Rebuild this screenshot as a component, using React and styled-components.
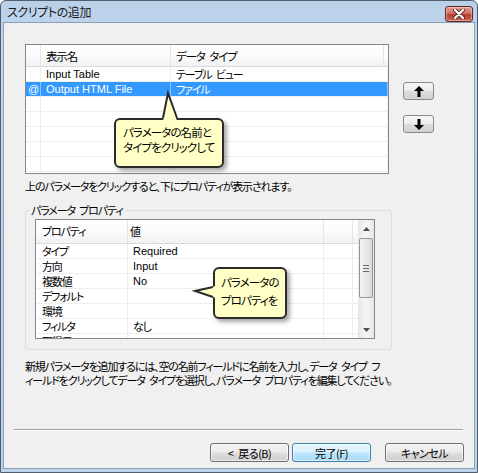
import React from 'react'
import styled, { createGlobalStyle, css } from 'styled-components'

const uiFont = `"Liberation Sans", "Noto Sans CJK JP", sans-serif`

// japanese ui text, squeezed to the width of the old ms ui gothic
const jpText = css`
  font-family: "Noto Sans CJK JP", sans-serif;
  font-size: 11px;
  letter-spacing: -1.15px;
  font-feature-settings: "palt";
`

const GlobalStyle = createGlobalStyle`
  html, body { margin: 0; padding: 0; background: #fff; }
  body {
    font-family: ${uiFont};
    font-size: 12px;
    color: #000;
    font-feature-settings: "palt";
  }
`

// window frame
const Window = styled.div`
  width: 478px;
  height: 473px;
  box-sizing: border-box;
  border: 1px solid #4f5d6c;
  border-radius: 6px 6px 0 0;
  background: linear-gradient(#b9d0e9, #c3d7ee 40px, #bcd2ea);
  padding: 0 2px 3px 2px;
  display: flex;
  flex-direction: column;
  overflow: hidden;
`
const TitleBar = styled.div`
  height: 21px;
  display: flex;
  align-items: center;
  justify-content: space-between;
  padding: 0 2px 0 4px;
`
const Title = styled.div`
  font-family: "Noto Sans CJK JP", sans-serif;
  font-size: 12px;
  letter-spacing: -0.4px;
  font-feature-settings: "palt";
  color: #1a1a1a;
`
const CloseButton = styled.div`
  width: 28px;
  height: 16px;
  margin-top: 5px;
  box-sizing: border-box;
  border: 1px solid #5a2b24;
  border-radius: 3px;
  background: linear-gradient(#e3a093, #cf7364 45%, #b83c2b 55%, #cc6656);
  box-shadow: inset 0 0 0 1px rgba(255, 220, 210, 0.5);
  display: flex;
  align-items: center;
  justify-content: center;
`
const Content = styled.div`
  flex: 1;
  background: #f0f0f0;
  border: 1px solid #8aa0b8;
  display: flex;
  flex-direction: column;
  min-height: 0;
`

// top list
const TopRow = styled.div`
  position: relative;
  display: flex;
  align-items: flex-start;
  margin: 21px 0 0 21px;
`
const ListBox = styled.div`
  width: 364px;
  height: 130px;
  box-sizing: border-box;
  border: 1px solid #828790;
  background: #fff;
  overflow: hidden;
`
const ListHeader = styled.div`
  display: grid;
  grid-template-columns: 15px 130px 1fr 4px;
  height: 21px;
  background: linear-gradient(#ffffff, #fbfbfc 50%, #f1f2f4);
  border-bottom: 1px solid #d9dadc;
`
const HeaderCell = styled.div`
  display: flex;
  align-items: center;
  padding-left: 5px;
  border-right: 1px solid #e4e5e7;
  ${jpText}
  font-size: 11.5px;
`
const ListRow = styled.div`
  display: grid;
  grid-template-columns: 15px 130px 1fr;
  height: 14px;
  border-bottom: 1px solid #eeeeee;
  background: ${p => (p.$selected ? '#3399ff' : '#fff')};
  color: ${p => (p.$selected ? '#fff' : '#000')};
`
const ListCell = styled.div`
  display: flex;
  align-items: center;
  padding-left: ${p => p.$pad ?? 5}px;
  border-right: 1px solid ${p => (p.$selected ? '#8cc4ff' : '#eeeeee')};
  white-space: nowrap;
  overflow: hidden;
  ${p => (p.$latin ? `font-family: ${uiFont}; font-size: 11px;` : jpText)}
`
const SideButtons = styled.div`
  display: flex;
  flex-direction: column;
  gap: 15px;
  margin: 38px 0 0 14px;
`
const ArrowButton = styled.div`
  width: 31px;
  height: 18px;
  box-sizing: border-box;
  border: 1px solid #8a8a8a;
  border-radius: 3px;
  background: linear-gradient(#f6f6f6, #ececec 48%, #dcdcdc 52%, #d2d2d2);
  display: flex;
  align-items: center;
  justify-content: center;
`

// callouts
const Callout = styled.div`
  position: absolute;
  left: ${p => p.$left}px;
  top: ${p => p.$top}px;
  width: ${p => p.$w}px;
  height: ${p => p.$h}px;
  box-sizing: border-box;
  background: #ffffc6;
  border: 2px solid #2b2b2b;
  border-radius: 6px;
  box-shadow: 3px 3px 4px rgba(0, 0, 0, 0.35);
  padding: ${p => p.$pad};
  ${jpText}
  font-size: 11.5px;
  letter-spacing: -0.9px;
  line-height: ${p => p.$lh}px;
  white-space: nowrap;
  z-index: 2;
`
const Tail = styled.svg`
  position: absolute;
  overflow: visible;
  left: ${p => p.$left}px;
  top: ${p => p.$top}px;
`

const Hint = styled.div`
  margin: 5px 0 0 21px;
  line-height: 14px;
  ${jpText}
`

// property group
const Group = styled.fieldset`
  margin: 10px 0 0 21px;
  width: 366px;
  box-sizing: border-box;
  padding: 2px 16px 10px 9px;
  border: 1px solid #d5dfe5;
  border-radius: 3px;
`
const GroupLabel = styled.legend`
  padding: 0 2px;
  margin-left: -6px;
  line-height: 14px;
  ${jpText}
`
const PropWrap = styled.div`
  position: relative;
`
const PropTable = styled.div`
  width: 340px;
  height: 120px;
  box-sizing: border-box;
  border: 1px solid #828790;
  background: #fff;
  display: flex;
`
const PropGrid = styled.div`
  flex: 1;
  overflow: hidden;
`
const PropHeader = styled.div`
  display: grid;
  grid-template-columns: 92px 196px 29px 1fr;
  height: 23px;
  background: linear-gradient(#ffffff, #fbfbfc 50%, #f1f2f4);
  border-bottom: 1px solid #d9dadc;
`
const PropRow = styled.div`
  display: grid;
  grid-template-columns: 92px 196px 29px 1fr;
  height: 14px;
  border-bottom: 1px solid #eeeeee;
`
const PropCell = styled.div`
  display: flex;
  align-items: center;
  padding-left: ${p => p.$pad ?? 6}px;
  border-right: 1px solid ${p => (p.$head ? '#e4e5e7' : '#eeeeee')};
  white-space: nowrap;
  overflow: hidden;
  line-height: 13px;
  ${p => (p.$latin ? `font-family: ${uiFont}; font-size: 11px;` : jpText)}
`
const ScrollBar = styled.div`
  width: 16px;
  background: linear-gradient(90deg, #e6e6e6, #f4f4f4 40%, #f4f4f4 60%, #e6e6e6);
  display: flex;
  flex-direction: column;
  align-items: center;
`
const ScrollArrow = styled.div`
  height: 17px;
  width: 16px;
  display: flex;
  align-items: center;
  justify-content: center;
`
const Thumb = styled.div`
  width: 14px;
  height: 60px;
  margin-top: 1px;
  box-sizing: border-box;
  border: 1px solid #979797;
  border-radius: 2px;
  background: linear-gradient(90deg, #f3f3f3, #e9e9e9 50%, #d9d9d9);
  display: flex;
  align-items: center;
  justify-content: center;
`
const ScrollSpace = styled.div`
  flex: 1;
`

const Description = styled.div`
  margin: 9px 0 0 21px;
  line-height: 14px;
  ${jpText}
`
const Spacer = styled.div`
  flex: 1;
`
const Separator = styled.div`
  height: 1px;
  margin: 0 11px 12px 10px;
  background: #a0a0a0;
  border-bottom: 1px solid #fff;
`
const Footer = styled.div`
  display: flex;
  justify-content: flex-end;
  padding: 0 10px 6px 0;
`
const DialogButton = styled.div`
  width: 79px;
  height: 19px;
  margin-left: ${p => p.$gap}px;
  box-sizing: border-box;
  border: 1px solid ${p => (p.$default ? '#3c7fb1' : '#707070')};
  border-radius: 3px;
  background: ${p =>
    p.$default
      ? 'linear-gradient(#eaf6fd, #d9f0fc 48%, #bee6fd 52%, #a7d9f5)'
      : 'linear-gradient(#f2f2f2, #ebebeb 48%, #dddddd 52%, #cfcfcf)'};
  box-shadow: inset 0 0 0 1px rgba(255, 255, 255, 0.6);
  display: flex;
  align-items: center;
  justify-content: center;
  ${jpText}
  letter-spacing: -0.5px;
`

const sp = '\u2002'

const listRows = [
  { mark: '', name: 'Input Table', type: `テーブル${sp}ビュー` },
  { mark: '@', name: 'Output HTML File', type: 'ファイル', selected: true },
  {}, {}, {}, {}, {},
]

const propRows = [
  ['タイプ', 'Required'],
  ['方向', 'Input'],
  ['複数値', 'No'],
  ['デフォルト', ''],
  ['環境', ''],
  ['フィルタ', 'なし'],
  ['取得元', ''],
]

function UpArrow() {
  return (
    <svg width="10" height="11" viewBox="0 0 10 11">
      <path d="M5 0 L10 5 H6.5 V11 H3.5 V5 H0 Z" fill="#000" />
    </svg>
  )
}
function DownArrow() {
  return (
    <svg width="10" height="11" viewBox="0 0 10 11">
      <path d="M5 11 L10 6 H6.5 V0 H3.5 V6 H0 Z" fill="#000" />
    </svg>
  )
}

function App() {
  return (
    <>
      <GlobalStyle />
      <Window>
        <TitleBar>
          <Title>スクリプトの追加</Title>
          <CloseButton>
            <svg width="12" height="10" viewBox="0 0 12 10">
              <path d="M2 1 L10 9 M10 1 L2 9" stroke="#5a2b24" strokeWidth="4" strokeLinecap="round" />
              <path d="M2 1 L10 9 M10 1 L2 9" stroke="#fff" strokeWidth="2.2" strokeLinecap="round" />
            </svg>
          </CloseButton>
        </TitleBar>
        <Content>
          <TopRow>
            <ListBox>
              <ListHeader>
                <HeaderCell />
                <HeaderCell>表示名</HeaderCell>
                <HeaderCell>データ{sp}タイプ</HeaderCell>
                <HeaderCell />
              </ListHeader>
              {listRows.map((r, i) => (
                <ListRow key={i} $selected={r.selected}>
                  <ListCell $pad={2} $latin $selected={r.selected}>{r.mark}</ListCell>
                  <ListCell $latin $selected={r.selected}>{r.name}</ListCell>
                  <ListCell $selected={r.selected}>{r.type}</ListCell>
                </ListRow>
              ))}
            </ListBox>
            <SideButtons>
              <ArrowButton><UpArrow /></ArrowButton>
              <ArrowButton><DownArrow /></ArrowButton>
            </SideButtons>
            <Callout $left={89} $top={74} $w={110} $h={50} $pad="5px 0 0 7px" $lh={15}>
              <Tail $left={40} $top={-30} width="30" height="32">
                <polygon points="7,31 12,3 21,31" fill="#ffffc6" />
                <polyline points="7,28 12,3 21,28" fill="none" stroke="#2b2b2b" strokeWidth="2" />
              </Tail>
              パラメータの名前と<br />タイプをクリックして
            </Callout>
          </TopRow>
          <Hint>上のパラメータをクリックすると、下にプロパティが表示されます。</Hint>
          <Group>
            <GroupLabel>パラメータ{sp}プロパティ</GroupLabel>
            <PropWrap>
              <PropTable>
                <PropGrid>
                  <PropHeader>
                    <PropCell $head>プロパティ</PropCell>
                    <PropCell $head $pad={2}>値</PropCell>
                    <PropCell $head />
                    <PropCell $head />
                  </PropHeader>
                  {propRows.map(([k, v]) => (
                    <PropRow key={k}>
                      <PropCell>{k}</PropCell>
                      <PropCell $latin={/^[A-Za-z]/.test(v)} $pad={5}>{v}</PropCell>
                      <PropCell />
                      <PropCell />
                    </PropRow>
                  ))}
                </PropGrid>
                <ScrollBar>
                  <ScrollArrow>
                    <svg width="7" height="4" viewBox="0 0 7 4"><path d="M0 4 L3.5 0 L7 4 Z" fill="#4d4d4d" /></svg>
                  </ScrollArrow>
                  <Thumb>
                    <svg width="6" height="7" viewBox="0 0 6 7">
                      <path d="M0 0.5 H6 M0 3.5 H6 M0 6.5 H6" stroke="#6d6d6d" strokeWidth="1" />
                    </svg>
                  </Thumb>
                  <ScrollSpace />
                  <ScrollArrow>
                    <svg width="7" height="4" viewBox="0 0 7 4"><path d="M0 0 L3.5 4 L7 0 Z" fill="#4d4d4d" /></svg>
                  </ScrollArrow>
                </ScrollBar>
              </PropTable>
              <Callout $left={178} $top={48} $w={74} $h={52} $pad="4px 0 0 6px" $lh={18}>
                <Tail $left={-22} $top={14} width="24" height="20">
                  <polygon points="23,3 2,8 23,15" fill="#ffffc6" />
                  <polyline points="20,4 2,8 20,14" fill="none" stroke="#2b2b2b" strokeWidth="2" />
                </Tail>
                パラメータの<br />プロパティを
              </Callout>
            </PropWrap>
          </Group>
          <Description>
            新規パラメータを追加するには、空の名前フィールドに名前を入力し、データ{sp}タイプ{sp}フ<br />
            ィールドをクリックしてデータ{sp}タイプを選択し、パラメータ{sp}プロパティを編集してください。
          </Description>
          <Spacer />
          <Separator />
          <Footer>
            <DialogButton $gap={0}>&lt;{sp}戻る(B)</DialogButton>
            <DialogButton $gap={3} $default>完了(F)</DialogButton>
            <DialogButton $gap={14}>キャンセル</DialogButton>
          </Footer>
        </Content>
      </Window>
    </>
  )
}

export default App
